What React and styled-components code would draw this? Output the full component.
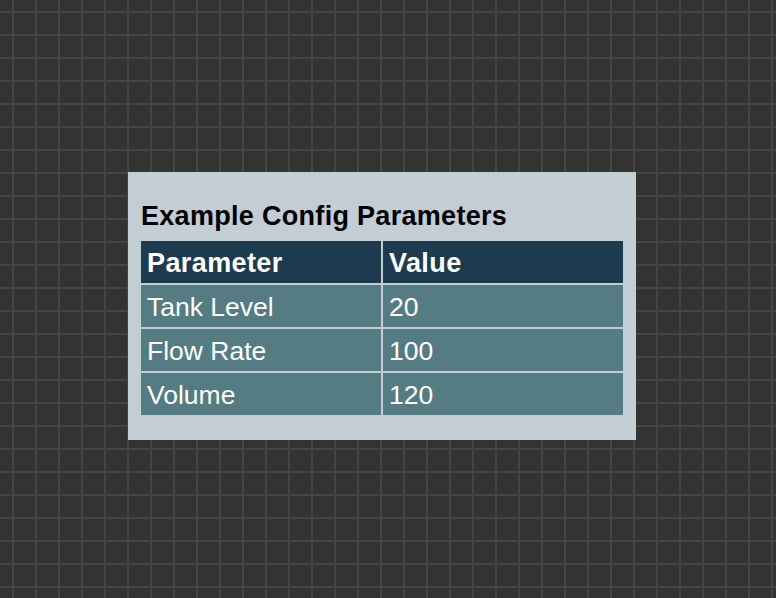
import React from "react";
import styled, { createGlobalStyle } from "styled-components";

const GlobalStyle = createGlobalStyle`
  html, body {
    margin: 0;
    padding: 0;
    background: #333333;
  }
  body {
    font-family: "Liberation Sans", Arial, Helvetica, sans-serif;
  }
`;

const Canvas = styled.div`
  min-height: 100vh;
  box-sizing: border-box;
  padding: 172px 0 0 128px;
  background-color: #333333;
  background-image:
    linear-gradient(to right, #444444 0, #444444 2px, transparent 2px),
    linear-gradient(to bottom, #444444 0, #444444 2px, transparent 2px);
  background-size: 23px 23px;
  background-position: 12px 11px;
`;

const Panel = styled.div`
  width: 508px;
  box-sizing: border-box;
  padding: 29px 13px 25px 13px;
  background: #c3cdd4;
`;

const Title = styled.h2`
  margin: 0 0 10px 0;
  font-size: 27px;
  line-height: 30px;
  font-weight: 700;
  letter-spacing: 0.3px;
  color: #000;
`;

const Table = styled.div`
  display: grid;
  grid-template-columns: 240px 240px;
  grid-auto-rows: 42px;
  gap: 2px;
  width: 482px;
`;

const Cell = styled.div`
  display: flex;
  align-items: center;
  padding: 2px 6px 0 6px;
  box-sizing: border-box;
  color: #ffffff;
  white-space: nowrap;
  background: ${(p) => (p.$head ? "#1d3a4f" : "#547c82")};
  font-size: ${(p) => (p.$head ? "27px" : "26.5px")};
  font-weight: ${(p) => (p.$head ? 700 : 400)};
  letter-spacing: ${(p) => (p.$head ? "0.4px" : "0")};
`;

const rows = [
  ["Tank Level", "20"],
  ["Flow Rate", "100"],
  ["Volume", "120"],
];

export default function App() {
  return (
    <>
      <GlobalStyle />
      <Canvas>
        <Panel>
          <Title>Example Config Parameters</Title>
          <Table>
            <Cell $head>Parameter</Cell>
            <Cell $head>Value</Cell>
            {rows.map(([k, v]) => (
              <React.Fragment key={k}>
                <Cell>{k}</Cell>
                <Cell>{v}</Cell>
              </React.Fragment>
            ))}
          </Table>
        </Panel>
      </Canvas>
    </>
  );
}
